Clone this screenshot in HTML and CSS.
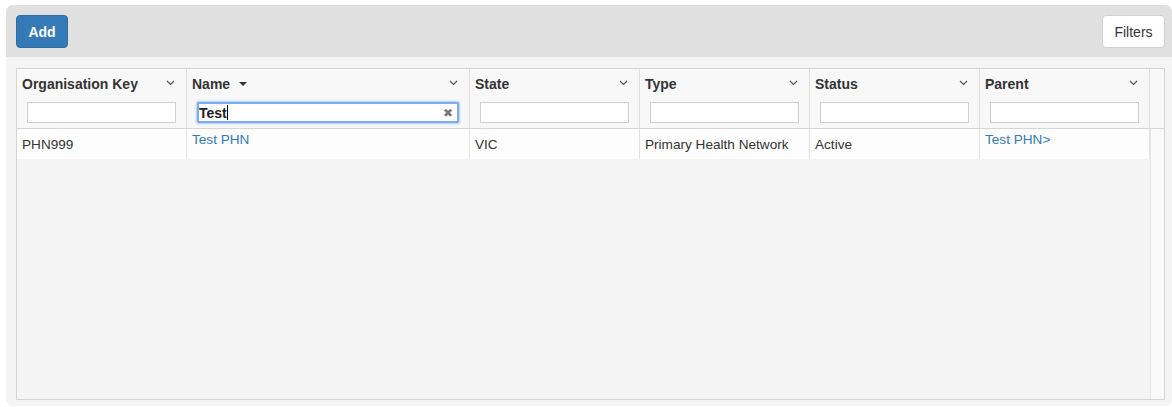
FILE: index.html
```html
<!DOCTYPE html>
<html>
<head>
<meta charset="utf-8">
<link rel="stylesheet" href="styles.css">
</head>
<body>
<div class="panel">
  <div class="toolbar">
    <button class="btn btn-primary">Add</button>
    <button class="btn btn-default">Filters</button>
  </div>
  <div class="content">
    <div class="grid">
      <div class="header">
        <div class="hcell">
          <div class="htitle"><span>Organisation Key</span><svg class="chev" width="9" height="6" viewBox="0 0 9 6"><polyline points="1,1 4.5,4.5 8,1" fill="none" stroke="#555" stroke-width="1.2"/></svg></div>
          <div class="hfilter"><input class="finput" type="text"></div>
        </div>
        <div class="hcell">
          <div class="htitle"><span>Name<span class="caret"></span></span><svg class="chev" width="9" height="6" viewBox="0 0 9 6"><polyline points="1,1 4.5,4.5 8,1" fill="none" stroke="#555" stroke-width="1.2"/></svg></div>
          <div class="hfilter"><div class="finput focused"><span class="ftext">Test</span><span class="fcaret"></span><span class="fclear">✖</span></div></div>
        </div>
        <div class="hcell">
          <div class="htitle"><span>State</span><svg class="chev" width="9" height="6" viewBox="0 0 9 6"><polyline points="1,1 4.5,4.5 8,1" fill="none" stroke="#555" stroke-width="1.2"/></svg></div>
          <div class="hfilter"><input class="finput" type="text"></div>
        </div>
        <div class="hcell">
          <div class="htitle"><span>Type</span><svg class="chev" width="9" height="6" viewBox="0 0 9 6"><polyline points="1,1 4.5,4.5 8,1" fill="none" stroke="#555" stroke-width="1.2"/></svg></div>
          <div class="hfilter"><input class="finput" type="text"></div>
        </div>
        <div class="hcell">
          <div class="htitle"><span>Status</span><svg class="chev" width="9" height="6" viewBox="0 0 9 6"><polyline points="1,1 4.5,4.5 8,1" fill="none" stroke="#555" stroke-width="1.2"/></svg></div>
          <div class="hfilter"><input class="finput" type="text"></div>
        </div>
        <div class="hcell">
          <div class="htitle"><span>Parent</span><svg class="chev" width="9" height="6" viewBox="0 0 9 6"><polyline points="1,1 4.5,4.5 8,1" fill="none" stroke="#555" stroke-width="1.2"/></svg></div>
          <div class="hfilter"><input class="finput" type="text"></div>
        </div>
        <div class="hgutter"></div>
      </div>
      <div class="body">
        <div class="rows">
          <div class="row">
            <div class="cell">PHN999</div>
            <div class="cell top"><a href="#">Test PHN</a></div>
            <div class="cell">VIC</div>
            <div class="cell">Primary Health Network</div>
            <div class="cell">Active</div>
            <div class="cell top"><a href="#">Test PHN&gt;</a></div>
          </div>
        </div>
        <div class="gutter"></div>
      </div>
    </div>
  </div>
</div>
</body>
</html>
```
FILE: styles.css
```css
html, body {
  margin: 0;
  padding: 0;
  background: #fff;
}
body {
  font-family: "Liberation Sans", Arial, Helvetica, sans-serif;
  font-size: 13.6px;
  color: #333;
}
.panel {
  margin: 5px 0 0 6px;
  width: 1166px;
  height: 401px;
  background: #f4f4f4;
  border-radius: 7px;
  display: flex;
  flex-direction: column;
  overflow: hidden;
}
.toolbar {
  background: #e0e0e0;
  height: 52px;
  box-sizing: border-box;
  padding: 10px 7px 0 10px;
  display: flex;
  justify-content: space-between;
  align-items: flex-start;
}
.btn {
  height: 33px;
  border-radius: 4px;
  font-family: "Liberation Sans", Arial, sans-serif;
  font-size: 14px;
  box-sizing: border-box;
  cursor: pointer;
}
.btn-primary {
  background: #337ab7;
  border: 1px solid #2e6da4;
  color: #fff;
  font-weight: bold;
  width: 52px;
  padding: 0;
  font-size: 14px;
}
.btn-default {
  background: #fff;
  border: 1px solid #d0d0d0;
  color: #333;
  width: 63px;
  padding: 0;
}
.content {
  flex: 1;
  padding: 11px 7px 6px 10px;
  display: flex;
  min-height: 0;
}
.grid {
  flex: 1;
  border: 1px solid #d4d4d4;
  display: flex;
  flex-direction: column;
  background: #f4f4f4;
}
.header {
  display: grid;
  grid-template-columns: 170px 283px 170px 170px 170px 170px 1fr;
  background: #f8f8f8;
  border-bottom: 1px solid #d6d6d6;
}
.hcell {
  border-right: 1px solid #dedede;
  display: flex;
  flex-direction: column;
  min-width: 0;
}
.htitle {
  height: 31px;
  box-sizing: border-box;
  padding: 0 11px 2px 5px;
  display: flex;
  align-items: center;
  justify-content: space-between;
  font-weight: bold;
  color: #333;
  font-size: 14px;
}
.chev {
  margin-top: -2px;
}
.caret {
  display: inline-block;
  width: 0;
  height: 0;
  border-left: 4px solid transparent;
  border-right: 4px solid transparent;
  border-top: 4px solid #333;
  margin-left: 9px;
  vertical-align: middle;
  position: relative;
  top: -1px;
}
.hfilter {
  padding: 2px 10px 5px 10px;
}
.finput {
  display: block;
  width: 100%;
  height: 21px;
  box-sizing: border-box;
  border: 1px solid #cfcfcf;
  background: #fff;
  margin: 0;
  padding: 0 3px;
  font-family: "Liberation Sans", Arial, sans-serif;
  font-size: 13px;
}
.finput.focused {
  border: 2px solid #7aaef0;
  box-shadow: 0 0 2px 1px rgba(110, 165, 240, 0.55);
  border-radius: 2px;
  display: flex;
  align-items: center;
  padding: 0 4px 0 0;
}
.ftext {
  font-weight: bold;
  color: #222;
  font-size: 14px;
}
.fcaret {
  width: 1px;
  height: 15px;
  background: #000;
}
.fclear {
  margin-left: auto;
  color: #777;
  font-size: 12px;
  line-height: 1;
}
.hgutter {
  background: #f8f8f8;
}
.body {
  flex: 1;
  display: flex;
  min-height: 0;
}
.rows {
  width: 1133px;
  background: #f4f4f4;
}
.row {
  display: grid;
  grid-template-columns: 170px 283px 170px 170px 170px 170px;
  height: 30px;
  background: #fdfdfd;
}
.cell {
  border-right: 1px solid #e2e2e2;
  padding: 0 5px;
  display: flex;
  align-items: center;
  padding-top: 1px;
  color: #333;
  white-space: nowrap;
  overflow: hidden;
}
.cell.top {
  align-items: flex-start;
  padding-top: 3px;
}
.cell a {
  color: #337ab7;
  text-decoration: none;
}
.gutter {
  flex: 1;
  background: #fafafa;
  border-left: 1px solid #e6e6e6;
}
```
